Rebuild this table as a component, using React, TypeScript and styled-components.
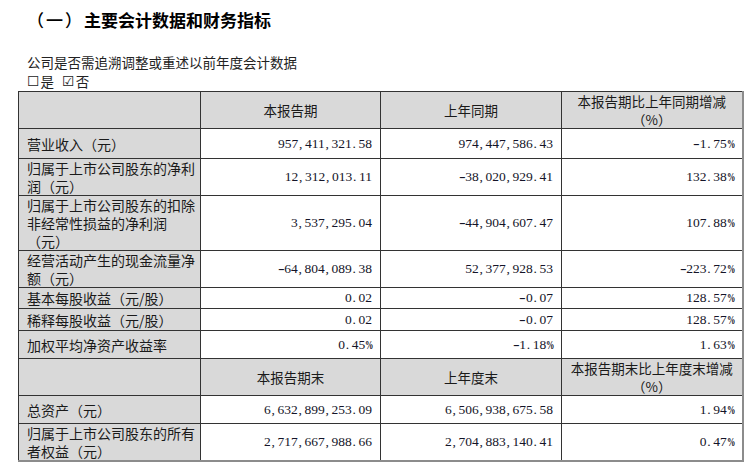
import React from 'react';
import styled, { createGlobalStyle } from 'styled-components';

const Global = createGlobalStyle`
  html, body { margin: 0; padding: 0; background: #fff; }
  body { font-family: "Noto Sans CJK SC", "Noto Sans", sans-serif; color: #111; }
`;

const Page = styled.div`
  width: 756px;
  height: 468px;
  box-sizing: border-box;
  padding: 8px 0 0 18px;
  overflow: hidden;
`;

const Title = styled.h2`
  margin: 0 0 0 9px;
  font-size: 17px;
  font-weight: 700;
  line-height: 24px;
  color: #000;
  display: flex;
  align-items: center;
`;

const TitleNum = styled.span`
  font-weight: 500;
  letter-spacing: 2px;
`;

const Intro = styled.p`
  margin: 20px 0 0 9px;
  font-size: 13.5px;
  line-height: 20px;
  color: #222;
`;

const Choice = styled.p`
  margin: 0 0 0 9px;
  font-size: 13.5px;
  line-height: 19px;
  color: #222;
  display: flex;
  align-items: center;
`;

const Box = styled.span`
  font-family: "DejaVu Sans", sans-serif;
  font-size: 14px;
  line-height: 19px;
  margin-right: 1px;
`;

const Gap = styled.span`
  display: inline-block;
  width: 8px;
`;

const Table = styled.table`
  border-collapse: collapse;
  table-layout: fixed;
  width: 724px;
  border-top: 1px solid #444;
  border-left: 1px solid #444;
  border-right: 2px solid #8c8c8c;
  border-bottom: 2px solid #8c8c8c;
`;

const Row = styled.tr<{ $h: number }>`
  height: ${(p) => p.$h}px;
`;

const Label = styled.td`
  background: #d9d9d9;
  border: 1px solid #333;
  padding: 0 4px 0 8px;
  font-size: 14px;
  line-height: 18px;
  vertical-align: middle;
  color: #1a1a1a;
  white-space: nowrap;
`;

const Head = styled.td`
  background: #d9d9d9;
  border: 1px solid #333;
  padding: 0 4px;
  font-size: 13.5px;
  line-height: 18px;
  text-align: center;
  vertical-align: middle;
  color: #1a1a1a;
  white-space: nowrap;
`;

const Value = styled.td`
  background: #fff;
  border: 1px solid #333;
  padding: 0 8px 0 4px;
  font-family: "Liberation Serif", "Times New Roman", serif;
  font-size: 13.5px;
  line-height: 18px;
  text-align: right;
  vertical-align: middle;
  color: #141428;
  white-space: nowrap;
`;

const Punct = styled.span`
  display: inline-block;
  width: 0.5em;
  text-align: left;
  padding-left: 0.06em;
  box-sizing: border-box;
`;

const Minus = styled.span`
  display: inline-block;
  width: 0.5em;
  text-align: center;
  font-weight: 700;
  transform: scaleX(1.5);
`;

const Pct = styled.span`
  display: inline-block;
  width: 0.5em;
  text-align: left;
  transform: scaleX(0.62);
  transform-origin: left center;
  font-weight: 700;
`;

const Num: React.FC<{ v: string }> = ({ v }) => (
  <>
    {v.split('').map((c, i) => {
      if (c === ',' || c === '.') return <Punct key={i}>{c}</Punct>;
      if (c === '-') return <Minus key={i}>-</Minus>;
      if (c === '%') return <Pct key={i}>%</Pct>;
      return <React.Fragment key={i}>{c}</React.Fragment>;
    })}
  </>
);

type DataRow = { label: React.ReactNode; a: string; b: string; c: string; h: number };

const rows1: DataRow[] = [
  { label: '营业收入（元）', a: '957,411,321.58', b: '974,447,586.43', c: '-1.75%', h: 30 },
  { label: <>归属于上市公司股东的净利<br />润（元）</>, a: '12,312,013.11', b: '-38,020,929.41', c: '132.38%', h: 36 },
  { label: <>归属于上市公司股东的扣除<br />非经常性损益的净利润<br />（元）</>, a: '3,537,295.04', b: '-44,904,607.47', c: '107.88%', h: 54 },
  { label: <>经营活动产生的现金流量净<br />额（元）</>, a: '-64,804,089.38', b: '52,377,928.53', c: '-223.72%', h: 37 },
  { label: '基本每股收益（元/股）', a: '0.02', b: '-0.07', c: '128.57%', h: 21 },
  { label: '稀释每股收益（元/股）', a: '0.02', b: '-0.07', c: '128.57%', h: 22 },
  { label: '加权平均净资产收益率', a: '0.45%', b: '-1.18%', c: '1.63%', h: 28 },
];

const rows2: DataRow[] = [
  { label: '总资产（元）', a: '6,632,899,253.09', b: '6,506,938,675.58', c: '1.94%', h: 28 },
  { label: <>归属于上市公司股东的所有<br />者权益（元）</>, a: '2,717,667,988.66', b: '2,704,883,140.41', c: '0.47%', h: 36 },
];

const renderRows = (rows: DataRow[], key: string) =>
  rows.map((r, i) => (
    <Row $h={r.h} key={key + i}>
      <Label>{r.label}</Label>
      <Value><Num v={r.a} /></Value>
      <Value><Num v={r.b} /></Value>
      <Value><Num v={r.c} /></Value>
    </Row>
  ));

export default function App() {
  return (
    <>
      <Global />
      <Page>
        <Title>
          <TitleNum>（一）</TitleNum>
          主要会计数据和财务指标
        </Title>
        <Intro>公司是否需追溯调整或重述以前年度会计数据</Intro>
        <Choice>
          <Box>☐</Box>是<Gap />
          <Box>☑</Box>否
        </Choice>
        <Table>
          <colgroup>
            <col style={{ width: 182 }} />
            <col style={{ width: 180 }} />
            <col style={{ width: 181 }} />
            <col style={{ width: 181 }} />
          </colgroup>
          <tbody>
            <Row $h={36}>
              <Head />
              <Head>本报告期</Head>
              <Head>上年同期</Head>
              <Head>本报告期比上年同期增减<br />（%）</Head>
            </Row>
            {renderRows(rows1, 'a')}
            <Row $h={36}>
              <Head />
              <Head>本报告期末</Head>
              <Head>上年度末</Head>
              <Head>本报告期末比上年度末增减<br />（%）</Head>
            </Row>
            {renderRows(rows2, 'b')}
          </tbody>
        </Table>
      </Page>
    </>
  );
}
